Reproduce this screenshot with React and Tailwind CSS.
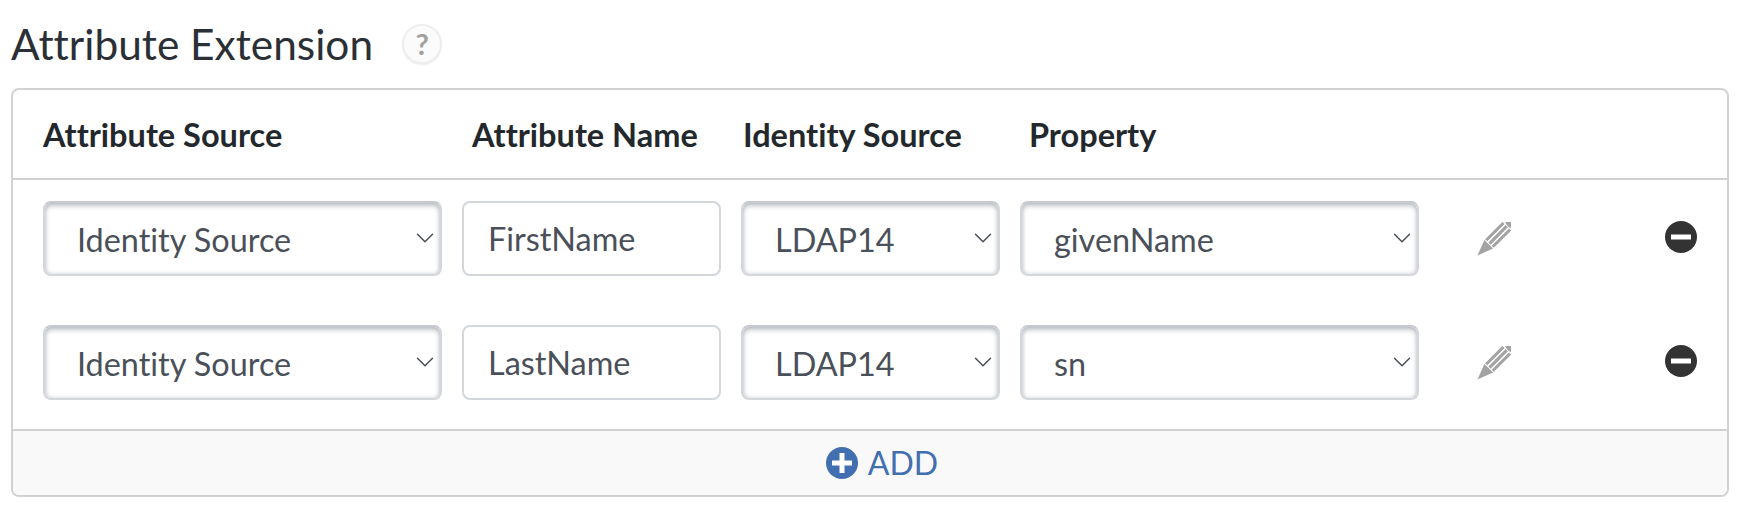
import { ChevronDown } from "lucide-react";

const rows = [
  { name: "FirstName", property: "givenName" },
  { name: "LastName", property: "sn" },
];

function SelectBox({ value, className }) {
  return (
    <div className={`relative ${className}`}>
      <select
        defaultValue={value}
        className="w-full h-[75px] pl-[32px] pr-10 pt-[3px] appearance-none bg-white rounded-[8px] border-2 border-[#d3d6da] border-t-[#c6cad0] shadow-[inset_0_3px_5px_rgba(90,100,115,0.35),inset_0_0_4px_rgba(90,100,115,0.25)] text-[32.4px] text-[#4a5059] outline-none"
      >
        <option>{value}</option>
      </select>
      <ChevronDown
        size={30}
        strokeWidth={1.2}
        className="absolute right-[2px] top-[22px] text-[#4a5059] pointer-events-none"
      />
    </div>
  );
}

function PencilIcon() {
  return (
    <svg width="34" height="34" viewBox="0 0 32 32">
      <g transform="rotate(45 16 16)" fill="#a3a3a3">
        <ellipse cx="16" cy="-5" rx="5.8" ry="3.2" />
        <path d="M10.2 -1h2.9v23h-2.9zM14.5 -1h3v23h-3zM18.9 -1h2.9v23h-2.9z" />
        <path d="M10.2 23h11.6l-5.8 15z" />
      </g>
    </svg>
  );
}

function MinusIcon() {
  return (
    <svg width="32" height="32" viewBox="0 0 32 32">
      <circle cx="16" cy="16" r="16" fill="#333333" />
      <rect x="6" y="13.5" width="20" height="5" fill="#ffffff" />
    </svg>
  );
}

function PlusIcon() {
  return (
    <svg width="32" height="32" viewBox="0 0 32 32">
      <circle cx="16" cy="16" r="16" fill="#426fb0" />
      <path d="M13.5 6h5v7.5H26v5h-7.5V26h-5v-7.5H6v-5h7.5z" fill="#ffffff" />
    </svg>
  );
}

export default function App() {
  return (
    <div className="w-[1740px] h-[518px] bg-white font-['Lato',sans-serif] [font-variant-ligatures:none] overflow-hidden">
      <div className="flex items-center h-[88px] pl-[11px]">
        <h2 className="text-[42.4px] leading-none text-[#2b3036]">Attribute Extension</h2>
        <div className="ml-[29px] w-[40px] h-[40px] rounded-full bg-[#fbfbfb] border-2 border-[#eeeeee] shadow-[0_1px_2px_rgba(0,0,0,0.08)] flex items-center justify-center text-[29px] font-bold text-[#a0a0a0]">
          ?
        </div>
      </div>

      <div className="ml-[11px] w-[1718px] h-[409px] border-2 border-[#d2d2d2] rounded-[8px] overflow-hidden flex flex-col">
        <div className="h-[90px] shrink-0 border-b-2 border-[#d2d2d2] pl-[30px] pt-[2px] grid grid-cols-[399px_259px_259px_399px] gap-x-[20px] items-center text-[32.5px] font-bold text-[#23282d]">
          <div>Attribute Source</div>
          <div className="pl-[10px] whitespace-nowrap">Attribute Name</div>
          <div className="pl-[2px] whitespace-nowrap">Identity Source</div>
          <div className="pl-[9px]">Property</div>
        </div>

        <div className="flex-1 pl-[30px] pt-[21px] flex flex-col gap-[49px]">
          {rows.map((row) => (
            <div key={row.name} className="flex items-center">
              <div className="grid grid-cols-[399px_259px_259px_399px] gap-x-[20px]">
                <SelectBox value="Identity Source" />
                <input
                  defaultValue={row.name}
                  className="w-full h-[75px] pl-[24px] bg-white rounded-[8px] border-2 border-[#d3d6da] text-[32.4px] text-[#4a5059] outline-none"
                />
                <SelectBox value="LDAP14" />
                <SelectBox value={row.property} />
              </div>
              <div className="ml-[58px]">
                <PencilIcon />
              </div>
              <div className="ml-[154px] mb-[4px]">
                <MinusIcon />
              </div>
            </div>
          ))}
        </div>

        <div className="h-[66px] shrink-0 border-t-2 border-[#d2d2d2] bg-[#f9f9f9] pl-[24px] flex items-center justify-center gap-[10px] text-[32px] text-[#426fb0]">
          <PlusIcon />
          <span>ADD</span>
        </div>
      </div>
    </div>
  );
}
